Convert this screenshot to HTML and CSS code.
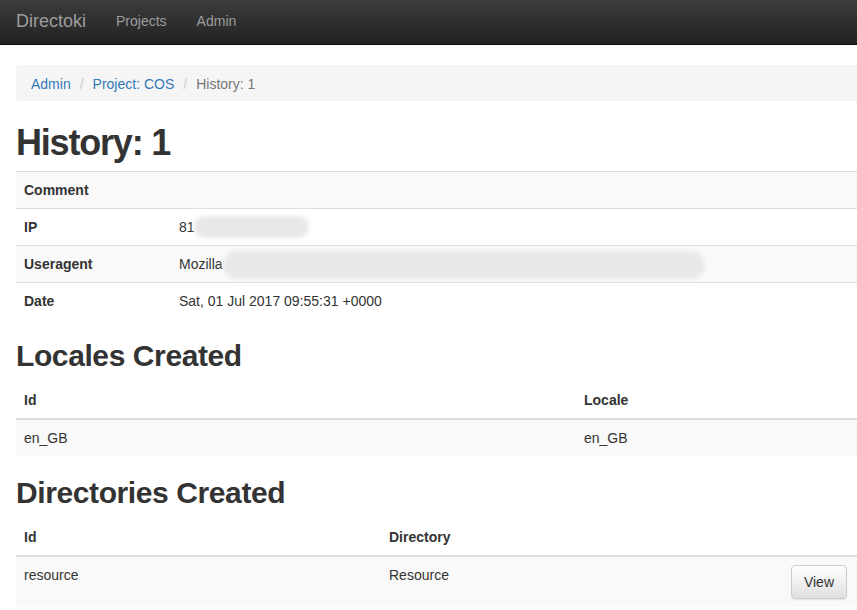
FILE: index.html
```html
<!DOCTYPE html>
<html lang="en">
<head>
<meta charset="utf-8">
<title>History: 1</title>
<link rel="stylesheet" href="styles.css">
</head>
<body>
<nav class="navbar">
  <a class="brand" href="#">Directoki</a>
  <a class="nav-link" href="#">Projects</a>
  <a class="nav-link" href="#">Admin</a>
</nav>
<div class="container">
  <ol class="breadcrumb">
    <li><a href="#">Admin</a></li>
    <li class="sep">/</li>
    <li><a href="#">Project: COS</a></li>
    <li class="sep">/</li>
    <li class="active">History: 1</li>
  </ol>
  <h1 class="h1-title">History: 1</h1>
  <table class="table striped info">
    <tbody>
      <tr><th class="c-label">Comment</th><td></td></tr>
      <tr><th class="c-label">IP</th><td>81<span class="blur blur-ip"></span></td></tr>
      <tr><th class="c-label">Useragent</th><td>Mozilla<span class="blur blur-ua"></span></td></tr>
      <tr><th class="c-label">Date</th><td>Sat, 01 Jul 2017 09:55:31 +0000</td></tr>
    </tbody>
  </table>
  <h2>Locales Created</h2>
  <table class="table striped">
    <thead>
      <tr><th class="c-loc-id">Id</th><th>Locale</th></tr>
    </thead>
    <tbody>
      <tr><td>en_GB</td><td>en_GB</td></tr>
    </tbody>
  </table>
  <h2>Directories Created</h2>
  <table class="table striped">
    <thead>
      <tr><th class="c-dir-id">Id</th><th class="c-dir-name">Directory</th><th></th></tr>
    </thead>
    <tbody>
      <tr><td>resource</td><td>Resource</td><td class="actions"><a class="btn" href="#">View</a></td></tr>
    </tbody>
  </table>
</div>
</body>
</html>
```
FILE: styles.css
```css
* { box-sizing: border-box; }
html, body { margin: 0; padding: 0; }
body {
  font-family: "Liberation Sans", Arial, Helvetica, sans-serif;
  font-size: 14px;
  line-height: 20px;
  color: #333;
  background: #fff;
}
a { text-decoration: none; }

.navbar {
  display: flex;
  align-items: center;
  height: 45px;
  padding-left: 16px;
  padding-bottom: 3px;
  background: linear-gradient(to bottom, #3c3c3c 0%, #222 100%);
  border-bottom: 1px solid #080808;
  margin-bottom: 20px;
}
.brand {
  color: #9d9d9d;
  font-size: 18px;
  line-height: 20px;
  margin-right: 30px;
}
.nav-link {
  color: #9d9d9d;
  font-size: 14px;
  margin-right: 30px;
}

.container {
  padding-left: 16px;
}

.breadcrumb {
  list-style: none;
  margin: 0 0 20px 0;
  padding: 9px 15px 7px;
  background: #f5f5f5;
  border-radius: 4px 0 0 4px;
  display: flex;
}
.breadcrumb a { color: #337ab7; }
.breadcrumb .sep { color: #ccc; padding: 0 9px 0 9px; }
.breadcrumb .active { color: #777; }

h1, h2 {
  font-weight: bold;
  line-height: 1.1;
  color: #333;
}
h1 { font-size: 36px; margin: 20px 0 10px; letter-spacing: -1.2px; padding-top: 2px; height: 40px; }
h2 { font-size: 30px; margin: 0 0 10px; letter-spacing: -0.4px; }

.table {
  width: 100%;
  border-collapse: collapse;
  border-spacing: 0;
  margin-bottom: 20px;
}
.table th, .table td {
  padding: 8px;
  line-height: 20px;
  text-align: left;
  vertical-align: top;
  border-top: 1px solid #ddd;
}
.table th { font-weight: bold; }
.table thead th {
  border-top: 0;
  border-bottom: 2px solid #ddd;
  vertical-align: bottom;
}
.striped tbody tr:nth-child(odd) { background: #f9f9f9; }

.c-label { width: 155px; }
.c-loc-id { width: 560px; }
.c-dir-id { width: 365px; }
.c-dir-name { width: 300px; }

.blur {
  display: inline-block;
  vertical-align: top;
  background: #e8e8e8;
  border-radius: 14px;
  filter: blur(2px);
}
.blur-ip { width: 115px; height: 22px; margin: -1px 0 -1px -1px; }
.blur-ua { width: 482px; height: 28px; margin: -3px 0 -5px 0; }

.table td.actions { text-align: right; padding-right: 10px; }
.btn {
  display: inline-block;
  padding: 6px 12px;
  font-size: 14px;
  line-height: 20px;
  color: #333;
  background: linear-gradient(to bottom, #fff 0%, #e0e0e0 100%);
  border: 1px solid #ccc;
  border-radius: 4px;
  box-shadow: inset 0 1px 0 rgba(255,255,255,.15), 0 1px 1px rgba(0,0,0,.075);
}
```
